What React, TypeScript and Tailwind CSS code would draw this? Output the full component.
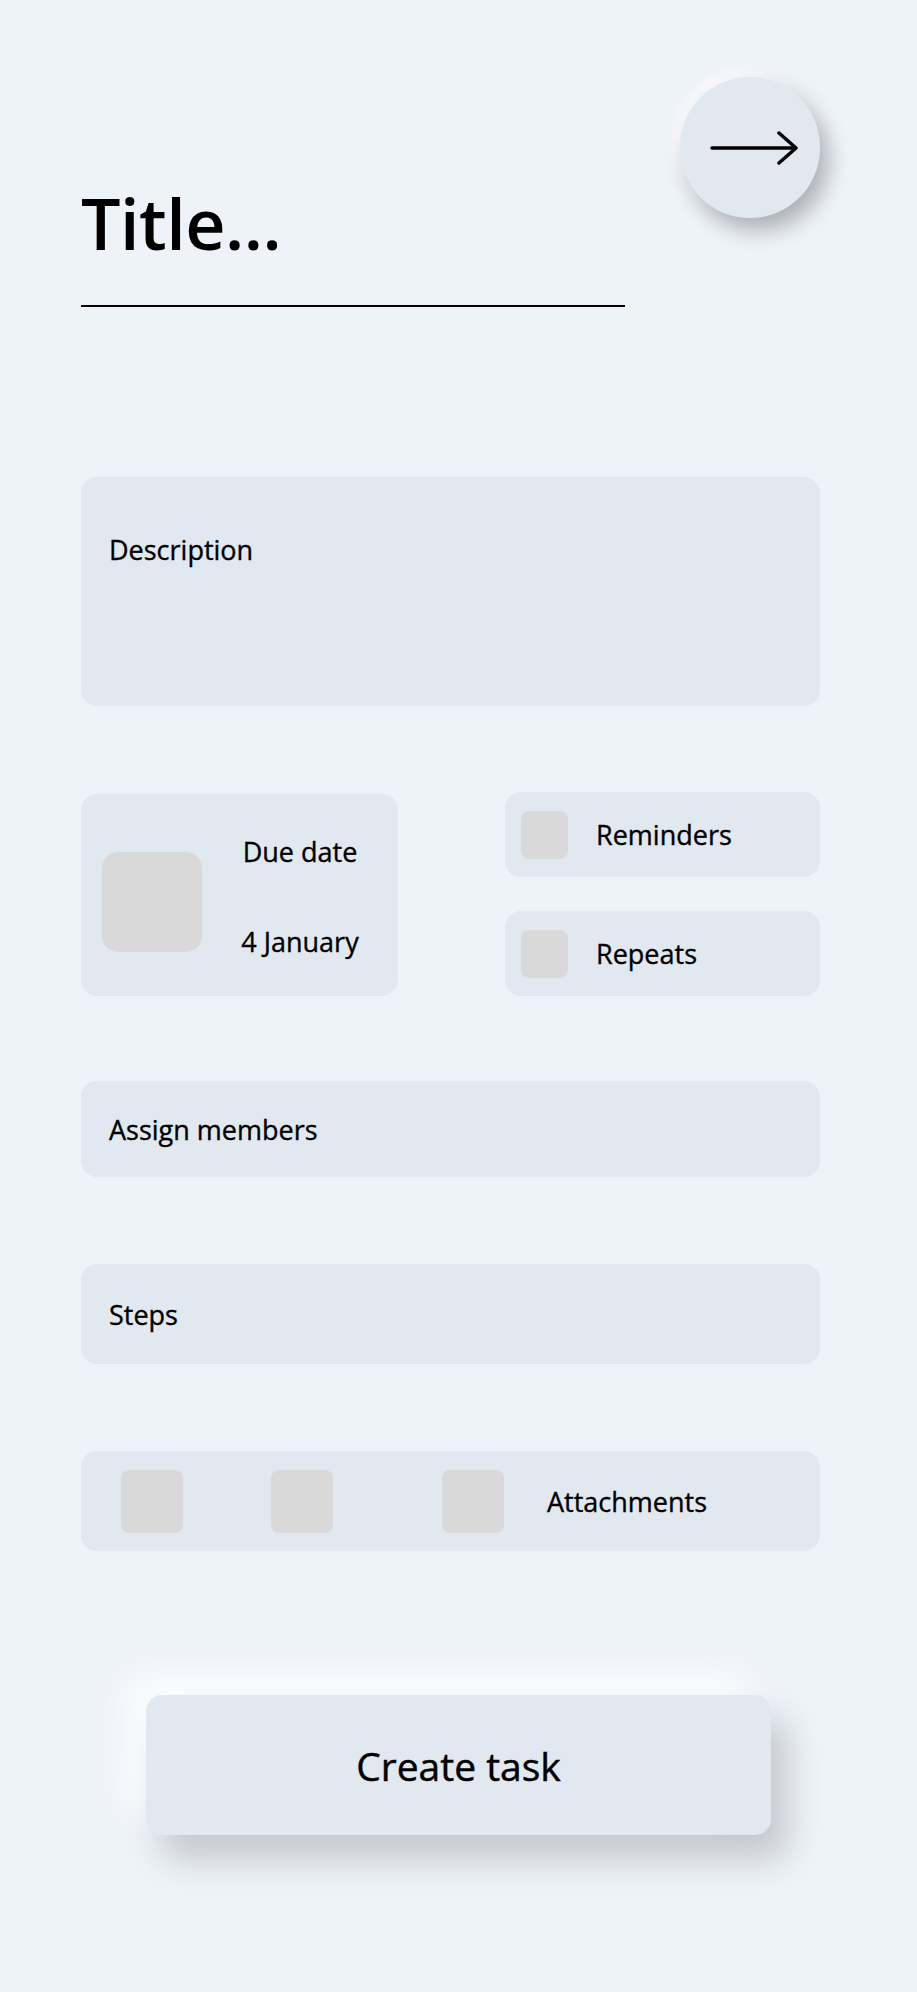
import React from "react";

const font = { fontFamily: '"Open Sans", "DejaVu Sans", sans-serif' };

function Tile({ className = "" }: { className?: string }) {
  return <div className={`bg-[#d9d9d9] ${className}`} />;
}

const label = "text-[27px] font-medium leading-none [-webkit-text-stroke:0.35px_black]";

export default function App() {
  return (
    <div className="min-h-[1992px] w-full bg-[#eef2f9] pt-[77px] text-black" style={font}>
      <div className="ml-[81px] w-[739px]">
        {/* Header: title + next button */}
        <div className="flex items-start justify-between">
          <div className="w-[544px] pt-[111px]">
            <h1 className="text-[70px] font-semibold leading-none tracking-[-0.5px]">Title...</h1>
            <div className="mt-[47px] h-[2px] w-full bg-black" />
          </div>
          <button className="flex h-[141px] w-[140px] items-center justify-center rounded-full bg-[#e2e8f0] shadow-[8px_12px_22px_rgba(0,0,0,0.28),-6px_-6px_14px_rgba(255,255,255,0.7)]">
            <svg width="88" height="34" viewBox="0 0 88 34" className="ml-[8px]" fill="none" stroke="black" strokeWidth="3.5" strokeLinecap="round" strokeLinejoin="round">
              <path d="M2 17H85" />
              <path d="M69 2L86 17L69 32" />
            </svg>
          </button>
        </div>

        {/* Description */}
        <div className="mt-[170px] h-[229px] rounded-2xl bg-[#e2e8f0] px-[28px] pt-[59px]">
          <p className={label}>Description</p>
        </div>

        {/* Due date / reminders / repeats */}
        <div className="mt-[86px] flex items-start justify-between">
          <div className="mt-[2px] flex h-[202px] w-[317px] items-start rounded-2xl bg-[#e2e8f0] pl-[21px]">
            <Tile className="mt-[58px] h-[100px] w-[100px] rounded-2xl" />
            <div className={`mt-[44px] flex flex-1 flex-col items-center gap-[63px] ${label}`}>
              <span>Due date</span>
              <span>4 January</span>
            </div>
          </div>
          <div className="flex w-[315px] flex-col gap-[34px]">
            {["Reminders", "Repeats"].map((text) => (
              <div key={text} className="flex h-[85px] items-center gap-[28px] rounded-2xl bg-[#e2e8f0] pl-[16px]">
                <Tile className="h-[48px] w-[47px] rounded-lg" />
                <span className={label}>{text}</span>
              </div>
            ))}
          </div>
        </div>

        {/* Assign members */}
        <div className="mt-[85px] flex h-[96px] items-center rounded-2xl bg-[#e2e8f0] px-[28px]">
          <span className={label}>Assign members</span>
        </div>

        {/* Steps */}
        <div className="mt-[87px] flex h-[100px] items-center rounded-2xl bg-[#e2e8f0] px-[28px]">
          <span className={label}>Steps</span>
        </div>

        {/* Attachments */}
        <div className="mt-[87px] flex h-[100px] items-center rounded-2xl bg-[#e2e8f0] pl-[40px]">
          <Tile className="h-[63px] w-[62px] rounded-lg" />
          <Tile className="ml-[88px] h-[63px] w-[62px] rounded-lg" />
          <Tile className="ml-[109px] h-[63px] w-[62px] rounded-lg" />
          <span className={`ml-[43px] ${label}`}>Attachments</span>
        </div>
      </div>

      {/* Create task */}
      <div className="mt-[144px] flex justify-center">
        <button className="flex h-[140px] w-[625px] items-center justify-center rounded-2xl bg-[#e2e8f0] text-[39px] font-medium leading-none [-webkit-text-stroke:0.45px_black] shadow-[16px_24px_36px_rgba(0,0,0,0.18),-20px_-20px_40px_rgba(255,255,255,0.9)]">
          Create task
        </button>
      </div>
    </div>
  );
}
